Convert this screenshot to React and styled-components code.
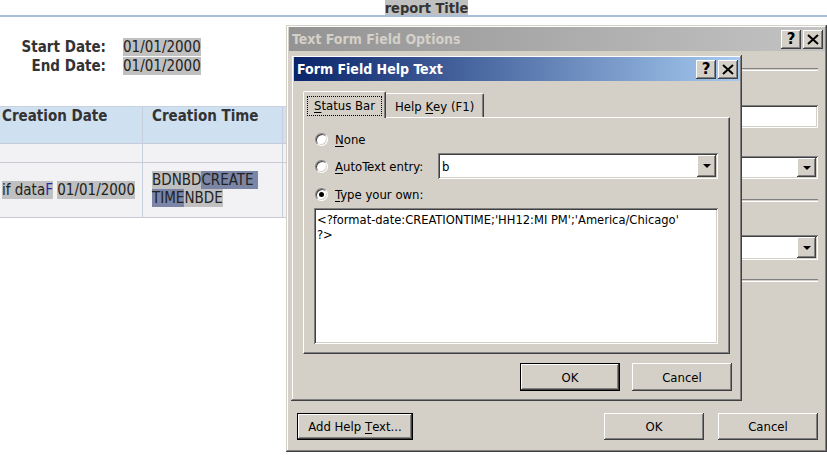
import styled, { createGlobalStyle, css } from 'styled-components';

const GlobalStyle = createGlobalStyle`
  html, body {
    margin: 0;
    padding: 0;
    background: #ffffff;
    overflow: hidden;
  }
`;

const uiFont = `"DejaVu Sans Condensed", "DejaVu Sans", sans-serif`;

const raised = css`
  box-shadow: inset -1px -1px #404040, inset 1px 1px #ffffff,
    inset -2px -2px #808080, inset 2px 2px #d4d0c8;
`;

const sunken = css`
  box-shadow: inset 1px 1px #808080, inset -1px -1px #ffffff,
    inset 2px 2px #404040, inset -2px -2px #d4d0c8;
`;

const Page = styled.div`
  position: relative;
  width: 827px;
  height: 456px;
  overflow: hidden;
  background: #ffffff;
  font-family: ${uiFont};
`;

/* ---------- report behind the dialogs ---------- */

const Report = styled.div`
  display: flex;
  flex-direction: column;
  color: #333333;
`;

const TitleRow = styled.div`
  display: flex;
  justify-content: center;
  align-items: flex-start;
  padding-left: 26px;
  height: 15px;
  font-size: 14.5px;
  font-weight: bold;
  line-height: 16px;
`;

const Mark = styled.span`
  background: ${(p) => (p.$selected ? '#7b86a6' : '#c0c0c0')};
  color: ${(p) => p.$color || 'inherit'};
`;

const Rule = styled.div`
  height: 2px;
  background: #a7bfda;
`;

const DateGrid = styled.div`
  display: grid;
  grid-template-columns: 106px auto;
  column-gap: 17px;
  justify-content: start;
  margin-top: 21px;
  font-size: 15px;
  line-height: 19px;
`;

const DateLabel = styled.div`
  text-align: right;
  font-weight: bold;
`;

const DateValue = styled.div`
  color: #222222;
`;

const Table = styled.div`
  display: grid;
  grid-template-columns: 143px 140px 1fr;
  margin-top: 30px;
  font-size: 15px;
`;

const Cell = styled.div`
  box-sizing: border-box;
  border-right: 1px solid #c6cfdb;
  border-bottom: 1px solid ${(p) => (p.$head ? '#c3ccd8' : '#c9c9d3')};
  background: ${(p) => (p.$head ? '#cfe0f0' : '#f2f2f5')};
  height: ${(p) => p.$h}px;
  padding-left: ${(p) => p.$pl || 0}px;
  font-weight: ${(p) => (p.$head ? 'bold' : 'normal')};
  display: flex;
  align-items: ${(p) => (p.$mid ? 'center' : 'flex-start')};
  line-height: 18px;
  color: ${(p) => (p.$head ? '#333333' : '#222222')};
`;

const HeadTop = styled.div`
  grid-column: 1 / -1;
  height: 1px;
  background: #c8d2de;
`;

/* ---------- windows ---------- */

const Window = styled.div`
  position: absolute;
  left: ${(p) => p.$x}px;
  top: ${(p) => p.$y}px;
  width: ${(p) => p.$w}px;
  height: ${(p) => p.$h}px;
  box-sizing: border-box;
  display: flex;
  flex-direction: column;
  padding: 2px 2px 3px 3px;
  background: #d4d0c8;
  box-shadow: inset -1px -1px #404040, inset 1px 1px #d4d0c8,
    inset -2px -2px #808080, inset 2px 2px #ffffff;
  font-family: ${uiFont};
  font-size: 13px;
  color: #000000;
`;

const TitleBar = styled.div`
  flex: 0 0 24px;
  display: flex;
  align-items: center;
  padding: 0 2px 0 3px;
  background: ${(p) =>
    p.$active
      ? 'linear-gradient(to right, #0a246a, #a6caf0)'
      : 'linear-gradient(to right, #939393, #c3c3c3)'};
`;

const TitleText = styled.div`
  flex: 1;
  font-weight: bold;
  font-size: 14px;
  color: ${(p) => (p.$active ? '#ffffff' : '#d4d0c8')};
  white-space: nowrap;
`;

const CaptionButton = styled.div`
  width: 20px;
  height: 19px;
  margin-left: ${(p) => (p.$gap ? 2 : 0)}px;
  display: flex;
  align-items: center;
  justify-content: center;
  background: #d4d0c8;
  ${raised};
  font-family: "DejaVu Sans", sans-serif;
  font-weight: bold;
  font-size: 15px;
  line-height: 1;
`;

const Caption = ({ gap }) => (
  <>
    <CaptionButton>?</CaptionButton>
    <CaptionButton $gap={gap}>
      <svg width="12" height="11" viewBox="0 0 12 11">
        <path d="M1 1 L11 10 M11 1 L1 10" stroke="#000" strokeWidth="2" />
      </svg>
    </CaptionButton>
  </>
);

const OuterBody = styled.div`
  flex: 1;
  display: flex;
  flex-direction: column;
  padding: 0 7px 9px 8px;
`;

const Etched = styled.div`
  height: 1px;
  border-top: 1px solid #808080;
  border-bottom: 1px solid #ffffff;
  margin-top: ${(p) => p.$mt}px;
`;

const Field = styled.div`
  box-sizing: border-box;
  height: ${(p) => p.$h}px;
  margin-top: ${(p) => p.$mt || 0}px;
  flex: ${(p) => (p.$w ? `0 0 ${p.$w}px` : 'none')};
  margin-left: ${(p) => (p.$w ? 'auto' : '0')};
  display: flex;
  align-items: center;
  justify-content: flex-end;
  padding: 2px 2px 2px 4px;
  background: #ffffff;
  ${sunken};
`;

const FieldText = styled.span`
  flex: 1;
`;

const ArrowButton = styled.div`
  width: 19px;
  height: 100%;
  display: flex;
  align-items: center;
  justify-content: center;
  background: #d4d0c8;
  ${raised};
  &::after {
    content: '';
    border-left: 4px solid transparent;
    border-right: 4px solid transparent;
    border-top: 4px solid #000000;
  }
`;

const Combo = ({ h, mt, w, text }) => (
  <Field $h={h} $mt={mt} $w={w}>
    {text && <FieldText>{text}</FieldText>}
    <ArrowButton />
  </Field>
);

const ButtonRow = styled.div`
  display: flex;
  align-items: center;
  gap: ${(p) => p.$gap}px;
  margin-top: auto;
`;

const Spacer = styled.div`
  flex: 1;
`;

const Button = styled.div`
  box-sizing: border-box;
  width: ${(p) => p.$w}px;
  height: ${(p) => p.$h}px;
  display: flex;
  align-items: center;
  justify-content: center;
  background: #d4d0c8;
  ${(p) =>
    p.$default
      ? css`
          border: 1px solid #000000;
          ${raised};
        `
      : raised};
`;

const Key = styled.span`
  text-decoration: underline;
  text-underline-offset: 2px;
`;

/* inner dialog */

const InnerBody = styled.div`
  flex: 1;
  display: flex;
  flex-direction: column;
  padding: 9px 8px 7px 9px;
`;

const Tabs = styled.div`
  display: flex;
  align-items: flex-end;
  height: 27px;
`;

const Tab = styled.div`
  box-sizing: border-box;
  height: ${(p) => (p.$on ? 27 : 24)}px;
  padding: ${(p) => (p.$on ? '4px 3px 2px' : '2px 9px 0')};
  margin-left: ${(p) => (p.$on ? 0 : -1)}px;
  background: #d4d0c8;
  border-top: 1px solid #ffffff;
  border-left: 1px solid #ffffff;
  border-right: 1px solid #404040;
  box-shadow: inset -1px 0 #808080;
  border-radius: 2px 2px 0 0;
  display: flex;
  align-items: center;
  position: relative;
  z-index: ${(p) => (p.$on ? 1 : 0)};
  margin-bottom: ${(p) => (p.$on ? -1 : 0)}px;
`;

const Focus = styled.span`
  padding: 2px 7px 3px;
  outline: 1px dotted #000000;
  outline-offset: -1px;
`;

const Panel = styled.div`
  flex: 0 0 235px;
  margin-right: 2px;
  box-sizing: border-box;
  display: flex;
  flex-direction: column;
  padding: 11px 11px 9px 10px;
  border-top: 1px solid #ffffff;
  border-left: 1px solid #ffffff;
  border-right: 1px solid #404040;
  border-bottom: 1px solid #404040;
  box-shadow: inset -1px -1px #808080;
`;

const OptionRow = styled.div`
  display: flex;
  align-items: center;
  height: ${(p) => p.$h}px;
  margin-top: ${(p) => p.$mt || 0}px;
  padding-left: 1px;
  gap: 7px;
`;

const Radio = styled.div`
  box-sizing: border-box;
  width: 13px;
  height: 13px;
  border-radius: 50%;
  background: #ffffff;
  border: 1px solid;
  border-color: #808080 #ffffff #ffffff #808080;
  box-shadow: inset 1px 1px #404040, inset -1px -1px #d4d0c8;
  display: flex;
  align-items: center;
  justify-content: center;
  &::after {
    content: '';
    display: ${(p) => (p.$on ? 'block' : 'none')};
    width: 5px;
    height: 5px;
    border-radius: 50%;
    background: #000000;
  }
`;

const TextArea = styled.div`
  box-sizing: border-box;
  margin-top: 5px;
  height: 136px;
  padding: 4px 3px;
  background: #ffffff;
  ${sunken};
  font-size: 12.8px;
  line-height: 15px;
  white-space: pre;
`;

export default function App() {
  return (
    <Page>
      <GlobalStyle />
      <Report>
        <TitleRow>
          <Mark>report Title</Mark>
        </TitleRow>
        <Rule />
        <DateGrid>
          <DateLabel>Start Date:</DateLabel>
          <DateValue>
            <Mark>01/01/2000</Mark>
          </DateValue>
          <DateLabel>End Date:</DateLabel>
          <DateValue>
            <Mark>01/01/2000</Mark>
          </DateValue>
        </DateGrid>
        <Table>
          <HeadTop />
          <Cell $head $h={37} $pl={2}>Creation Date</Cell>
          <Cell $head $h={37} $pl={9}>Creation Time</Cell>
          <Cell $head $h={37} />
          <Cell $h={19} />
          <Cell $h={19} />
          <Cell $h={19} />
          <Cell $h={55} $mid $pl={2}>
            <span>
              <Mark>
                if data<Mark $color="#1f2ab0">F</Mark>
              </Mark>{' '}
              <Mark>01/01/2000</Mark>
            </span>
          </Cell>
          <Cell $h={55} $pl={9} style={{ paddingTop: 8 }}>
            <span>
              <Mark>BDNBD</Mark>
              <Mark $selected>CREATE&nbsp;</Mark>
              <br />
              <Mark $selected>TIME</Mark>
              <Mark>NBDE</Mark>
            </span>
          </Cell>
          <Cell $h={55} />
        </Table>
      </Report>

      <Window $x={286} $y={25} $w={541} $h={427}>
        <TitleBar>
          <TitleText>Text Form Field Options</TitleText>
          <Caption gap />
        </TitleBar>
        <OuterBody>
          <Etched $mt={17} />
          <Field $h={23} $mt={34} />
          <Combo h={23} mt={28} />
          <Etched $mt={20} />
          <Combo h={25} mt={33} />
          <Etched $mt={19} />
          <ButtonRow $gap={14}>
            <Button $default $w={116} $h={27}>
              Add Help&nbsp;<Key>T</Key>ext...
            </Button>
            <Spacer />
            <Button $w={100} $h={27}>OK</Button>
            <Button $w={100} $h={27}>Cancel</Button>
          </ButtonRow>
        </OuterBody>

        <Window $x={5} $y={30} $w={451} $h={346}>
          <TitleBar $active>
            <TitleText $active>Form Field Help Text</TitleText>
            <Caption gap />
          </TitleBar>
          <InnerBody>
            <Tabs>
              <Tab $on>
                <Focus>
                  <Key>S</Key>tatus Bar
                </Focus>
              </Tab>
              <Tab>
                Help&nbsp;<Key>K</Key>ey (F1)
              </Tab>
            </Tabs>
            <Panel>
              <OptionRow $h={20}>
                <Radio />
                <span>
                  <Key>N</Key>one
                </span>
              </OptionRow>
              <OptionRow $h={26} $mt={4}>
                <Radio />
                <span>
                  <Key>A</Key>utoText entry:
                </span>
                <Combo h={26} w={280} text="b" />
              </OptionRow>
              <OptionRow $h={18} $mt={6}>
                <Radio $on />
                <span>
                  <Key>T</Key>ype your own:
                </span>
              </OptionRow>
              <TextArea>
                {"<?format-date:CREATIONTIME;'HH12:MI PM';'America/Chicago'\n?>"}
              </TextArea>
            </Panel>
            <ButtonRow $gap={12}>
              <Spacer />
              <Button $default $w={100} $h={28}>OK</Button>
              <Button $w={100} $h={28}>Cancel</Button>
            </ButtonRow>
          </InnerBody>
        </Window>
      </Window>
    </Page>
  );
}
